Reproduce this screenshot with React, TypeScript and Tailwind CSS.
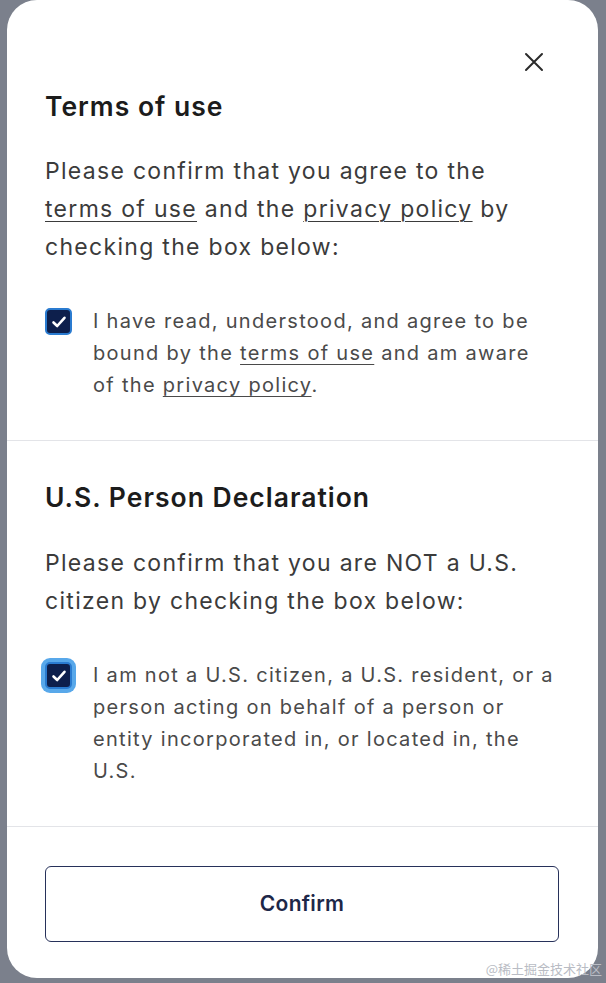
import React from "react";

function Check({ focus }: { focus?: boolean }) {
  return (
    <div
      className={
        "shrink-0 w-[27px] h-[27px] rounded-[5px] bg-[#0d1f4c] border-2 border-[#2a7bd0] flex items-center justify-center " +
        (focus ? "ring-[4px] ring-[#58a8ea]" : "")
      }
    >
      <svg width="16" height="14" viewBox="0 0 16 14" fill="none">
        <path d="M2.5 7.5 L6.2 11 L13.5 2.8" stroke="white" strokeWidth="2.6" strokeLinecap="round" strokeLinejoin="round" />
      </svg>
    </div>
  );
}

export default function App() {
  return (
    <div className="min-h-screen h-[983px] bg-[#7b808c] pl-[7px] pr-[8px]" style={{ fontFamily: "Inter, 'Noto Sans', sans-serif" }}>
      <div className="relative bg-white rounded-[30px] h-[978px] flex flex-col">
        <button className="absolute top-[50px] right-[52px] w-[24px] h-[24px] flex items-center justify-center text-[#2b2b2b]">
          <svg width="22" height="22" viewBox="0 0 22 22" fill="none">
            <path d="M3 3 L19 19 M19 3 L3 19" stroke="#2b2b2b" strokeWidth="2" strokeLinecap="round" />
          </svg>
        </button>

        <section className="pl-[38px] pr-[38px] pt-[90px] pb-[39px] border-b border-[#e3e4e8]">
          <h2 className="text-[26.5px] leading-[32px] font-semibold text-[#1c1c1c] tracking-[1px]">Terms of use</h2>
          <p className="mt-[30px] text-[23px] leading-[38px] text-[#3b3b3b] tracking-[1.3px]">
            Please confirm that you agree to the <span className="underline underline-offset-[4px] decoration-1">terms of use</span> and the{" "}
            <span className="underline underline-offset-[4px] decoration-1">privacy policy</span> by checking the box below:
          </p>
          <div className="mt-[39px] flex gap-[21px]">
            <div className="pt-[3px]">
              <Check />
            </div>
            <p className="pr-[5px] text-[20px] leading-[32px] text-[#4a4a4a] tracking-[1.3px]">
              I have read, understood, and agree to be bound by the{" "}
              <span className="underline underline-offset-[4px] decoration-1">terms of use</span> and am aware of the{" "}
              <span className="underline underline-offset-[4px] decoration-1">privacy policy</span>.
            </p>
          </div>
        </section>

        <section className="pl-[38px] pr-[38px] pt-[40px] pb-[39px] border-b border-[#e3e4e8]">
          <h2 className="text-[26.5px] leading-[32px] font-semibold text-[#1c1c1c] tracking-[1px]">U.S. Person Declaration</h2>
          <p className="mt-[31px] text-[23px] leading-[38px] text-[#3b3b3b] tracking-[1.3px]">
            Please confirm that you are NOT a U.S. citizen by checking the box below:
          </p>
          <div className="mt-[39px] flex gap-[21px]">
            <div className="pt-[3px]">
              <Check focus />
            </div>
            <p className="pr-[5px] text-[20px] leading-[32px] text-[#4a4a4a] tracking-[1.3px]">
              I am not a U.S. citizen, a U.S. resident, or a person acting on behalf of a person or entity incorporated in, or located in, the U.S.
            </p>
          </div>
        </section>

        <div className="pl-[38px] pt-[39px]">
          <button className="w-[514px] h-[76px] rounded-[6px] border-[1.5px] border-[#27315a] text-[21px] font-semibold text-[#1d2748] tracking-[0.3px]">
            Confirm
          </button>
        </div>

        <div
          className="absolute right-[-4px] bottom-[0px] text-[13px] text-[#b9bcc4]"
          style={{ fontFamily: "'Noto Sans CJK SC', sans-serif" }}
        >
          @稀土掘金技术社区
        </div>
      </div>
    </div>
  );
}
